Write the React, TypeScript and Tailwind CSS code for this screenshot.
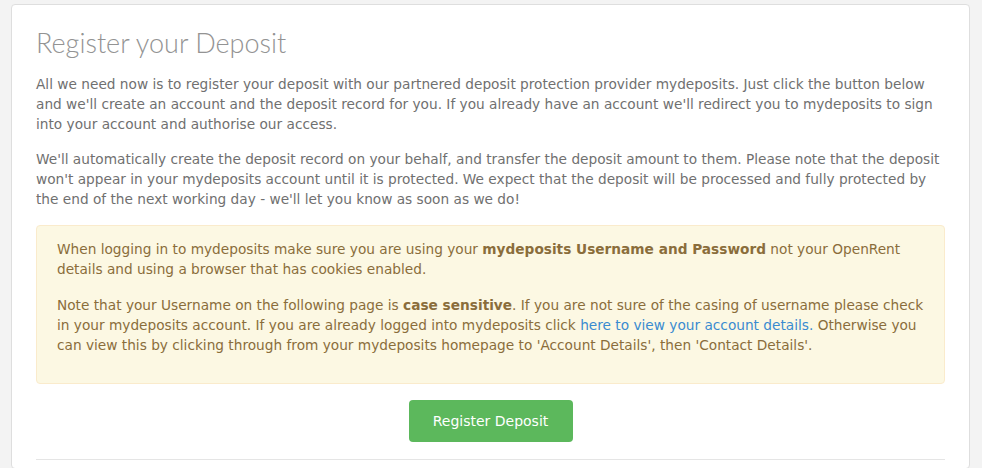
import React from 'react'

function RegisterDeposit() {
  return (
    <div className="min-h-[468px] bg-[#f3f3f3] pl-[11px] pr-[12px] pt-[4px] font-['DejaVu_Sans',sans-serif]">
      <div className="rounded-[4px] border border-[#dedede] bg-white px-[24px] pt-[23px] pb-[8px]">
        <h2 className="font-['Lato',sans-serif] text-[27px] font-light leading-[30px] text-[#939393]">Register your Deposit</h2>
        <div className="mt-[16px] text-[13.7px] leading-[20px] text-[#707070]">
          <p>
            All we need now is to register your deposit with our partnered deposit protection provider mydeposits. Just click the button below
            and we'll create an account and the deposit record for you. If you already have an account we'll redirect you to mydeposits to sign
            into your account and authorise our access.
          </p>
          <p className="mt-[15px]">
            We'll automatically create the deposit record on your behalf, and transfer the deposit amount to them. Please note that the deposit
            won't appear in your mydeposits account until it is protected. We expect that the deposit will be processed and fully protected by
            the end of the next working day - we'll let you know as soon as we do!
          </p>
        </div>
        <div className="mt-[16px] rounded-[4px] border border-[#faebcc] bg-[#fcf8e3] px-[20px] pt-[13px] pb-[28px] text-[13.7px] leading-[20px] text-[#8a6d3b]">
          <p>
            When logging in to mydeposits make sure you are using your <b>mydeposits Username and Password</b> not your OpenRent
            details and using a browser that has cookies enabled.
          </p>
          <p className="mt-[16px]">
            Note that your Username on the following page is <b>case sensitive</b>. If you are not sure of the casing of username please check
            in your mydeposits account. If you are already logged into mydeposits click{' '}
            <a href="#" className="text-[#3a8bd0]">here to view your account details.</a> Otherwise you
            can view this by clicking through from your mydeposits homepage to 'Account Details', then 'Contact Details'.
          </p>
        </div>
        <div className="mt-[16px] flex justify-center">
          <button className="h-[42px] w-[164px] rounded-[4px] bg-[#5cb85c] text-[14px] text-white">Register Deposit</button>
        </div>
        <div className="mt-[17px] border-t border-[#e5e5e5]" />
      </div>
    </div>
  )
}

export default function App() {
  return <RegisterDeposit />
}
